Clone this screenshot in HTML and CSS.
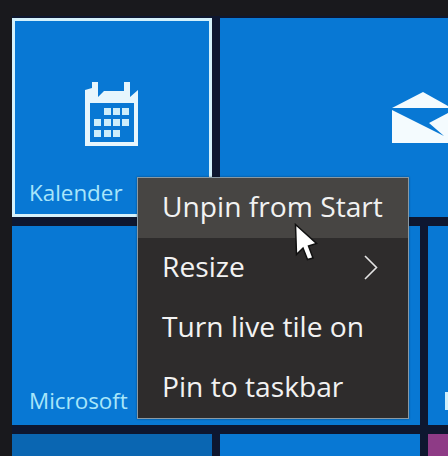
FILE: index.html
```html
<!DOCTYPE html>
<html lang="en">

<head>
    <meta charset="UTF-8">
    <meta name="viewport" content="width=device-width, initial-scale=1.0">
    <title>Start menu</title>
    <link rel="stylesheet" href="styles.css">
</head>

<body>
    <div class="tiles">
        <div class="tile tile-selected">
            <div class="tile-icon">
                <svg class="calendar-icon" width="54" height="65" viewBox="85 82 54 65">
                    <path fill="#e6f6fd" fill-rule="evenodd" d="M85 90L92 88V82H98V97L104 91H124V82H130V97L138 90V146H85ZM90 103V142H134V103Z"/>
                    <g fill="#cdeefb">
                        <rect x="104" y="108" width="7" height="7"/>
                        <rect x="113" y="108" width="7" height="7"/>
                        <rect x="122" y="108" width="7" height="7"/>
                        <rect x="94" y="119" width="7" height="7"/>
                        <rect x="104" y="119" width="7" height="7"/>
                        <rect x="113" y="119" width="7" height="7"/>
                        <rect x="122" y="119" width="7" height="7"/>
                        <rect x="94" y="130" width="7" height="7"/>
                        <rect x="104" y="130" width="7" height="7"/>
                        <rect x="113" y="130" width="7" height="7"/>
                    </g>
                </svg>
            </div>
            <span class="tile-label">Kalender</span>
        </div>
        <div class="tile tile-mail">
            <svg class="mail-icon" width="56" height="51" viewBox="392 92 56 51">
                <path fill="#f4fbfe" d="M423 92L448 106V108H392Z"/>
                <path fill="#f4fbfe" d="M392 110L444 136L429 123L448 113V143H392Z"/>
            </svg>
        </div>
        <div class="tile tile-wide">
            <span class="tile-label">Microsoft</span>
        </div>
        <div class="tile tile-side"><span class="side-mark"></span></div>
        <div class="tile tile-dark"></div>
        <div class="tile"></div>
        <div class="tile tile-purple"></div>
    </div>

    <div class="context-menu">
        <div class="menu-item menu-item-active">Unpin from Start</div>
        <div class="menu-item">
            <span>Resize</span>
            <svg class="chevron" width="14" height="25" viewBox="0 0 14 25">
                <path fill="none" stroke="#e4e4e4" stroke-width="1.6" d="M1 1L12.5 12.5L1 24"/>
            </svg>
        </div>
        <div class="menu-item">Turn live tile on</div>
        <div class="menu-item">Pin to taskbar</div>
    </div>

    <svg class="cursor" width="24" height="38" viewBox="294 223 24 38">
        <path fill="#fff" stroke="#111" stroke-width="1.5" d="M295.5 224.5L316.5 243.5L308.5 246L313 258L307.5 259.5L303 248L296.5 254.5Z"/>
    </svg>
</body>

</html>
```

FILE: styles.css
```css
* {
    margin: 0;
    padding: 0;
    box-sizing: border-box;
}

html,
body {
    width: 448px;
    height: 456px;
    overflow: hidden;
}

body {
    position: relative;
    background: #19191d;
    font-family: 'Open Sans', 'Liberation Sans', sans-serif;
    color: white;
}

.tiles {
    display: grid;
    grid-template-columns: 200px 200px 20px;
    grid-template-rows: 199px 199px 22px;
    gap: 9px 8px;
    margin: 16px 0 0 12px;
    padding-top: 2px;
    background: #0e1730;
}

.tile {
    position: relative;
    display: flex;
    align-items: flex-end;
    background: #0878d4;
    overflow: hidden;
}

.tile-selected {
    border: 3px solid #d4f1fb;
    padding: 0 0 6px 14px;
}

.tile-icon {
    position: absolute;
    top: 61px;
    left: 70px;
}

.calendar-icon,
.mail-icon {
    display: block;
}

.tile-mail {
    grid-column: 2 / 4;
    align-items: flex-start;
    padding: 74px 0 0 172px;
}

.tile-wide {
    grid-column: 1 / 3;
    padding: 0 0 9px 17px;
}

.tile-label {
    color: #a8e6fa;
    font-size: 22.4px;
    line-height: 30px;
}

.side-mark {
    position: absolute;
    left: 17px;
    top: 166px;
    width: 3px;
    height: 18px;
    background: #cdeefb;
}

.tile-dark {
    background: #0a66b2;
}

.tile-purple {
    background: #8e3b86;
}

/* Context menu sits over the tiles */
.context-menu {
    position: absolute;
    left: 137px;
    top: 177px;
    width: 272px;
    height: 242px;
    background: #2e2c2c;
    border: 1px solid #8a99a3;
    box-shadow: 0 0 2px rgba(0, 0, 0, 0.4);
}

.menu-item {
    display: flex;
    align-items: center;
    justify-content: space-between;
    height: 60px;
    padding: 0 30px 4px 24px;
    font-size: 28.2px;
    color: #f2f2f2;
    white-space: nowrap;
}

.menu-item-active {
    background: #474543;
}

.chevron {
    display: block;
    margin-top: 2px;
}

.cursor {
    position: absolute;
    left: 294px;
    top: 223px;
}
```
